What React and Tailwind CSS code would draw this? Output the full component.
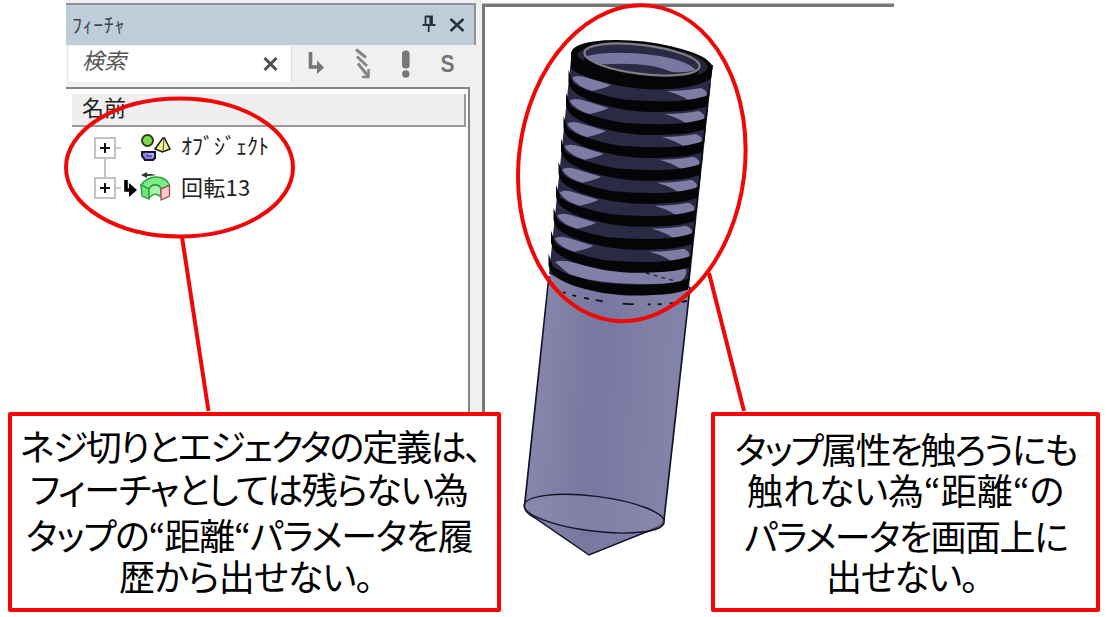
import React from "react";

const THREADS = [0, 1, 2, 3, 4, 5, 6, 7, 8];

const LEFT_LINES = [
  { text: "ネジ切りとエジェクタの定義は、", cls: "left-[20px] top-[15px] tracking-[-1.95px]" },
  { text: "フィーチャとしては残らない為", cls: "left-[30px] top-[58px] tracking-[-1.35px]" },
  { text: "タップの“距離“パラメータを履", cls: "left-[26px] top-[104px] tracking-[-1.25px]" },
  { text: "歴から出せない。", cls: "left-[119px] top-[145px] tracking-[-0.8px]" },
];

const RIGHT_LINES = [
  { text: "タップ属性を触ろうにも", cls: "left-[24px] top-[18px] tracking-[-2.1px]" },
  { text: "触れない為“距離“の", cls: "left-[36px] top-[59px] tracking-[-0.1px]" },
  { text: "パラメータを画面上に", cls: "left-[33px] top-[105px] tracking-[-1.5px]" },
  { text: "出せない。", cls: "left-[115px] top-[145px] tracking-[-1.3px]" },
];

function Expander() {
  return (
    <span className="flex h-[22px] w-[22px] shrink-0 items-center justify-center border-2 border-[#c3c3c3] bg-white">
      <svg width="10" height="10" viewBox="0 0 10 10">
        <path d="M0 5H10M5 0V10" stroke="#111" strokeWidth="2" />
      </svg>
    </span>
  );
}

function ShapesIcon() {
  return (
    <svg width="32" height="30" viewBox="0 0 32 30" className="shrink-0">
      <circle cx="7.500" cy="7.500" r="5.500" fill="#7fd850" stroke="#23421a" strokeWidth="2" />
      <path d="M23 5L15 16L22.500 19L30 16L24.500 5Z" fill="#f4efa0" stroke="#1d1d10" strokeWidth="1.500" />
      <path d="M24 6L23 18" stroke="#55502a" strokeWidth="1" />
      <path d="M5 19H15V25H5Z" fill="#b9aef2" stroke="#171238" strokeWidth="2" />
      <path d="M5 19H2V23L5 27H13L15 25" fill="#8f80d8" stroke="#171238" strokeWidth="2" />
      <path d="M6 23H12" stroke="#5546a8" strokeWidth="1.500" />
    </svg>
  );
}

function RevolveIcon() {
  return (
    <svg width="32" height="32" viewBox="0 0 32 32" className="shrink-0">
      <path d="M1 13Q7 5 16 5Q26 5 29.500 13L21 17Q20 13 15 13Q11 13 9 17Z" fill="#7deb86" stroke="#2b9a3c" strokeWidth="1.300" />
      <path d="M1 13L9 17V27L2 24Z" fill="#6de478" stroke="#2b9a3c" strokeWidth="1.300" />
      <path d="M9 17Q11 13 15 13Q20 13 21 17V25Q15 19 9 26Z" fill="#a4f3a6" stroke="#2b9a3c" strokeWidth="1.300" />
      <path d="M21 17L29.500 13.500V24L21 28Z" fill="#f8cccd" stroke="#a04a50" strokeWidth="1.300" />
      <path d="M1 3L7 0V2Q12 1.500 16 3Q12 4 7 4V6Z" fill="#333" />
    </svg>
  );
}

function FeaturePanel() {
  return (
    <section className="flex h-[413px] w-[410px] flex-col bg-[#f0f0f1] pt-[3px]">
      <header className="flex h-[42px] items-center border-t-2 border-r-2 border-[#8d929b] bg-[#bfcddb] pr-[9px] pl-[6px]">
        <span className="flex-1 text-[20px] leading-[38px] tracking-[0.6px] text-[#3e4650]">ﾌｨｰﾁｬ</span>
        <svg width="14" height="18" viewBox="0 0 14 18" className="mr-[13px] -mt-[2px]">
          <path d="M3 1.500H11M3.500 1V10M10 1V10M8.300 1V10M0.500 10H13.500M6.700 10V17" fill="none" stroke="#26323e" strokeWidth="1.800" />
        </svg>
        <svg width="16" height="14" viewBox="0 0 16 14" className="-mt-[1px]">
          <path d="M1.500 1L14.500 13M14.500 1L1.500 13" stroke="#26323e" strokeWidth="2.500" />
        </svg>
      </header>
      <div className="flex h-[42px] shrink-0">
        <div className="mt-px ml-[3px] flex h-[36px] w-[223px] justify-between border-r border-[#d9dce4] bg-white pr-[13px] pl-[13px]">
          <span className="-mt-[3px] text-[22px] leading-[32px] text-[#555] italic">検索</span>
          <svg width="15" height="14" viewBox="0 0 15 14" className="mt-[11px]">
            <path d="M1.500 1L13.500 13M13.500 1L1.500 13" stroke="#505050" strokeWidth="3" />
          </svg>
        </div>
        <svg width="170" height="42" viewBox="292 45 170 42">
          <path d="M310.500 52V67H318" fill="none" stroke="#777" strokeWidth="3.600" />
          <path d="M317 60.500L324 67.500L317 74Z" fill="#777" />
          <path d="M356 49.500L366 57.500M357 56.500L367 66M358 63.500L368 76" stroke="#858585" strokeWidth="3" />
          <path d="M368.500 69V77H362" fill="none" stroke="#858585" strokeWidth="2.500" />
          <rect x="402" y="50.500" width="7.600" height="18" rx="3.500" fill="#777" />
          <circle cx="405.800" cy="74" r="3.700" fill="#777" />
          <text x="440.500" y="71.500" fontFamily="Liberation Sans, sans-serif" fontSize="24" fontWeight="700" fill="#777" textLength="14" lengthAdjust="spacingAndGlyphs">S</text>
        </svg>
      </div>
      <div className="flex min-h-0 w-[404px] flex-1 flex-col border-t-2 border-r-2 border-[#858589] bg-white pt-[5px]">
        <div className="ml-[6px] flex h-[33px] w-[394px] shrink-0 border-r-2 border-b-2 border-[#9a9a9a] bg-[#efefef] pl-[10px]">
          <span className="text-[22px] leading-[24px] text-[#222]">名前</span>
        </div>
        <div className="ml-[28px] flex h-[41px] items-center">
          <Expander />
          <span className="h-[2px] w-[5px] bg-[#c8c8c8]" />
          <span className="w-[19px]" />
          <ShapesIcon />
          <span className="-mt-[6px] ml-[9px] text-[22px] text-[#222]">ｵﾌﾞｼﾞｪｸﾄ</span>
        </div>
        <div className="relative ml-[28px] flex h-[40px] items-center">
          <span className="absolute -top-[10px] left-[10px] h-[19px] w-[2px] bg-[#c3c3c3]" />
          <Expander />
          <span className="h-[2px] w-[5px] bg-[#c8c8c8]" />
          <svg width="19" height="22" viewBox="0 0 19 22">
            <path d="M5 3V13H10" fill="none" stroke="#000" strokeWidth="3.600" />
            <path d="M8 6L16 13L8 20Z" fill="#000" />
          </svg>
          <RevolveIcon />
          <span className="-mt-[4px] ml-[9px] text-[22px] tracking-[0.3px] text-[#222]">回転13</span>
        </div>
      </div>
    </section>
  );
}

function Drill() {
  return (
    <svg width="200" height="540" viewBox="515 30 200 540" className="mt-[23px] ml-[30px] shrink-0">
      <defs>
        <linearGradient id="steel" x1="0" x2="1" y1="0" y2="0.1">
          <stop offset="0" stopColor="#8b8aae" />
          <stop offset="0.45" stopColor="#7877a0" />
          <stop offset="1" stopColor="#8584aa" />
        </linearGradient>
      </defs>
      <path d="M550 276L524 507Q525 514 535 519L589 556L655 530Q664 526 664 520L690 287Z" fill="url(#steel)" />
      <path d="M549 277L524.500 507M690 288L664 521" stroke="#14132a" strokeWidth="1.700" />
      <path d="M524.500 507Q524 513 535 519L589 556L656 529Q664 526 664 520" fill="none" stroke="#14132a" strokeWidth="1.500" />
      <ellipse cx="594.200" cy="514.700" rx="70.500" ry="17.500" transform="rotate(7 594.200 514.700)" fill="#8f8eb3" fillOpacity="0.350" stroke="#14132a" strokeWidth="1.400" />
      <path d="M563 293C590 303 645 310 687 302" fill="none" stroke="#111" strokeWidth="1.800" strokeDasharray="3 7 4 8 5 7 7 20 11 14" />
      <path d="M571 60L549 275Q590 294 689 289L712 72Z" fill="#2b2a45" />
      <path d="M555 263Q562 260 575 264Q620 275 686 270Q688 278 678 284Q610 288 570 276Z" fill="#807fa8" />
      {THREADS.slice(0, 8).map((i) => (
        <g key={i} transform={`translate(${-2.5 * i} ${22.95 * i})`}>
          <path d="M572 79Q576 75 588 79L611 86Q606 89 592 92Q578 88 572 79Z" fill="#7d7ca5" />
          <path d="M667 92Q685 92 701 89Q709 92 706 98Q698 102 688 101Q681 96 667 92Z" fill="#7d7ca5" />
        </g>
      ))}
      <path d="M646 274L675 282" stroke="#222" strokeWidth="1.300" strokeDasharray="4 4" />
      {THREADS.map((i) => (
        <g key={i} transform={`translate(${-2.5 * i} ${22.95 * i})`}>
          <path d="M568.500 71L573 84Q582 90 593 93Q608 98 623 100.500Q650 103 675 102Q695 101 709 96L708 107Q694 112 673 112.500Q655 113.500 640 112.500Q622 111 607 107Q590 103 580 97Q570 92 568.500 83Z" fill="#050507" />
          <path d="M710 84L708.500 98" stroke="#08080d" strokeWidth="1.500" />
        </g>
      ))}
      <path d="M571 53V69Q577 76 600 82Q628 90 655 90.500Q690 91 711 80L713 66Z" fill="#050507" />
      <ellipse cx="642" cy="61.500" rx="71" ry="19" transform="rotate(6.500 642 61.500)" fill="#050507" />
      <path d="M577 54Q590 43 617 43Q600 47 588 53L583 62Q577 58 577 54ZM680 52Q705 58 708 68Q706 74 697 76Q703 67 696 60Z" fill="#242338" />
      <ellipse cx="642" cy="60.500" rx="58" ry="14.500" transform="rotate(7 642 60.500)" fill="#2b2a45" stroke="#7f7f80" strokeWidth="2.200" />
      <path d="M587 57Q612 51 652 56Q685 60 696 71Q686 74 672 73Q650 63 610 65Q600 66 594 63Q588 60 587 57Z" fill="#7877a0" />
    </svg>
  );
}

function Callout({ box, lines }) {
  return (
    <aside className={`absolute top-[412px] h-[200px] text-black ${box}`}>
      {lines.map((l) => (
        <span key={l.text} className={`absolute text-[36px] leading-[36px] whitespace-nowrap ${l.cls}`}>
          {l.text}
        </span>
      ))}
    </aside>
  );
}

export default function App() {
  return (
    <main className="relative flex h-[617px] w-[1108px] overflow-hidden bg-white pl-[66px] font-['Noto_Sans_CJK_JP',sans-serif]">
      <FeaturePanel />
      <div className="h-[413px] w-[6px] bg-[#f0f0f1]" />
      <section className="mt-[3px] h-[590px] w-[412px]">
        <div className="h-[4px] border-t border-b-[3px] border-[#777] border-t-[#bbb]" />
        <div className="-mt-px flex h-[407px] border-l-[3px] border-[#777]">
          <Drill />
        </div>
      </section>

      <svg width="1108" height="617" viewBox="0 0 1108 617" className="absolute inset-0">
        <g fill="none" stroke="#f00808" strokeWidth="4">
          <ellipse cx="179.500" cy="167.500" rx="113.500" ry="69" />
          <path d="M182 237L208.500 411M709 273L744 411" />
          <ellipse cx="631.800" cy="163.200" rx="113" ry="158.500" transform="rotate(7 631.800 163.200)" />
        </g>
      </svg>

      <div className="absolute top-[412px] left-[8px] h-[200px] w-[493px] rounded-[2px] border-4 border-[#fa0505] bg-white" />
      <div className="absolute top-[412px] left-[711px] h-[200px] w-[389px] rounded-[2px] border-4 border-[#fa0505] bg-white" />
      <Callout box="left-0 w-[500px] [font-feature-settings:'palt']" lines={LEFT_LINES} />
      <Callout box="left-[711px] w-[389px] [font-feature-settings:'palt']" lines={RIGHT_LINES} />
    </main>
  );
}
